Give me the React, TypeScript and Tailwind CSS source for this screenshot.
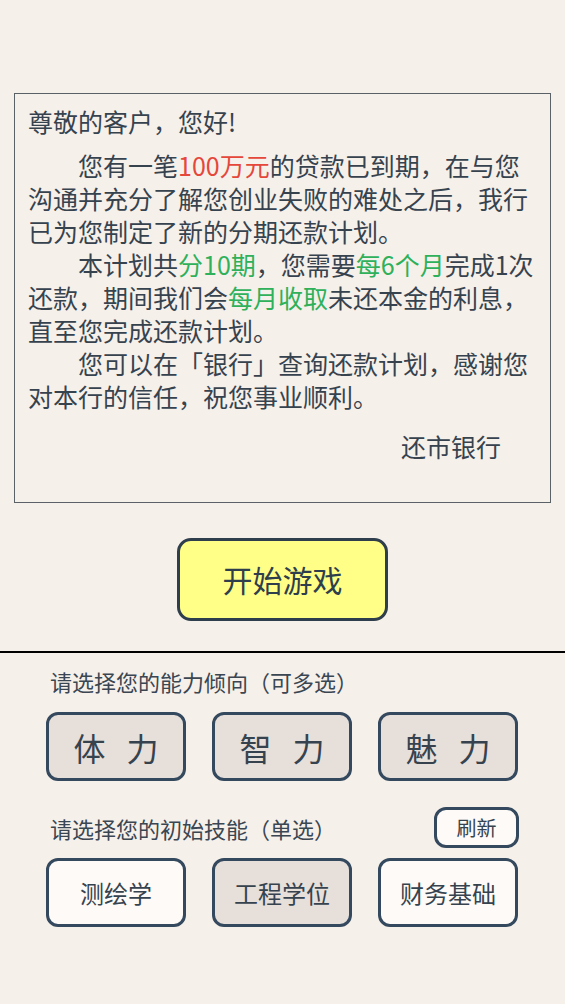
const font = "font-['Noto_Sans_CJK_SC','Noto_Sans',sans-serif]";

const Red = ({ children }: { children: React.ReactNode }) => (
  <span className="text-[#e5473a]">{children}</span>
);

const Green = ({ children }: { children: React.ReactNode }) => (
  <span className="text-[#2fb05a]">{children}</span>
);

const abilities = [
  ["体", "力"],
  ["智", "力"],
  ["魅", "力"],
];
const skills = [
  { name: "测绘学", active: false },
  { name: "工程学位", active: true },
  { name: "财务基础", active: false },
];

export default function App() {
  return (
    <div className={`${font} min-h-[1004px] w-[565px] bg-[#f6f0ea] text-[#36434f]`}>
      <div className="pt-[93px] px-[14px]">
        {/* letter */}
        <div className="h-[410px] border border-[#5a6268] px-[13px] pt-[11px] text-[25px] leading-[33px]">
          <p className="mb-[11px]">尊敬的客户，您好!</p>
          <p className="indent-[50px]">
            您有一笔<Red>100万元</Red>的贷款已到期，在与您沟通并充分了解您创业失败的难处之后，我行已为您制定了新的分期还款计划。
          </p>
          <p className="indent-[50px]">
            本计划共<Green>分10期</Green>，您需要<Green>每6个月</Green>完成1次还款，期间我们会<Green>每月收取</Green>未还本金的利息，直至您完成还款计划。
          </p>
          <p className="indent-[50px]">
            您可以在「银行」查询还款计划，感谢您对本行的信任，祝您事业顺利。
          </p>
          <p className="mt-[17px] text-right pr-[36px]">还市银行</p>
        </div>
      </div>

      <div className="flex justify-center pt-[35px] pb-[30px]">
        <button className="h-[83px] w-[211px] rounded-[14px] border-[3px] border-[#2f3e4c] bg-[#ffff88] text-[30px] text-[#2f3e4c]">
          开始游戏
        </button>
      </div>

      <div className="h-[2px] bg-black" />

      <div className="px-[46px]">
        <p className="pl-[4px] pt-[12px] text-[22px] leading-[32px] text-[#3a4652]">请选择您的能力倾向（可多选）</p>
        <div className="mt-[15px] flex gap-[26px]">
          {abilities.map(([a, b]) => (
            <button
              key={a}
              className="flex h-[69px] w-[140px] items-center justify-center gap-[21px] rounded-[12px] border-[3px] border-[#34495e] bg-[#e6dfda] text-[32px] text-[#36434f]"
            >
              <span>{a}</span>
              <span>{b}</span>
            </button>
          ))}
        </div>

        <div className="mt-[26px] flex items-center justify-between">
          <p className="pl-[4px] text-[22px] leading-[32px] text-[#3a4652]">请选择您的初始技能（单选）</p>
          <button className="h-[41px] w-[85px] rounded-[12px] border-[3px] border-[#34495e] bg-[#fdfaf7] text-[20px] text-[#36434f]">
            刷新
          </button>
        </div>
        <div className="mt-[10px] flex gap-[26px]">
          {skills.map((s) => (
            <button
              key={s.name}
              className={`h-[69px] w-[140px] rounded-[12px] border-[3px] border-[#34495e] text-[24px] text-[#36434f] ${
                s.active ? "bg-[#e6dfda]" : "bg-[#fdfaf7]"
              }`}
            >
              {s.name}
            </button>
          ))}
        </div>
      </div>
    </div>
  );
}
